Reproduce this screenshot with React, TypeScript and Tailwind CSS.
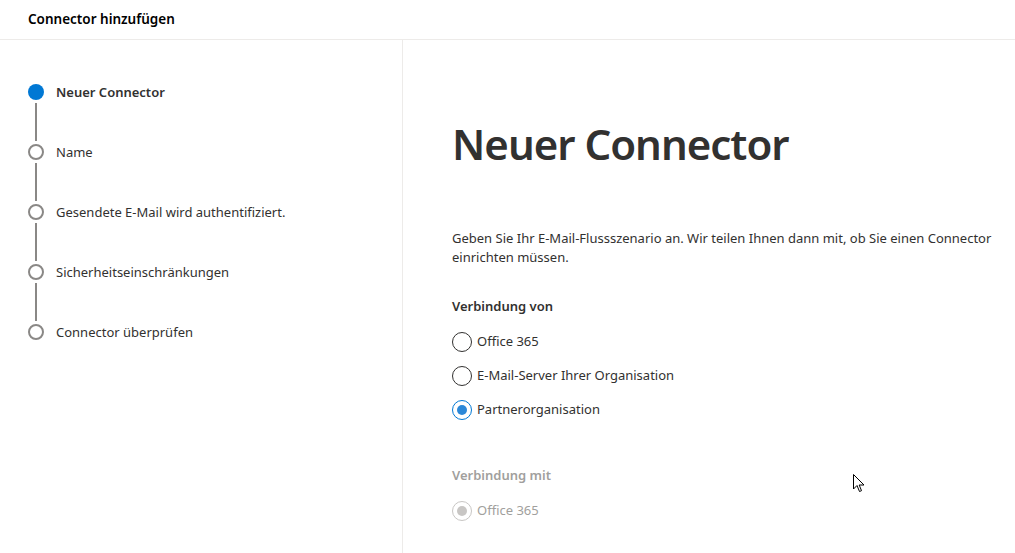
const steps = [
  'Neuer Connector',
  'Name',
  'Gesendete E-Mail wird authentifiziert.',
  'Sicherheitseinschränkungen',
  'Connector überprüfen',
];

const fromOptions = [
  { label: 'Office 365', checked: false },
  { label: 'E-Mail-Server Ihrer Organisation', checked: false },
  { label: 'Partnerorganisation', checked: true },
];

function Radio({ label, checked, disabled }: { label: string; checked?: boolean; disabled?: boolean }) {
  const ring = disabled ? 'border-[#c8c6c4]' : checked ? 'border-[#0078d4]' : 'border-[#323130]';
  return (
    <div className="flex items-center h-[34px]">
      <span className={`w-5 h-5 rounded-full border ${ring} flex items-center justify-center shrink-0`}>
        {checked && (
          <span className={`w-[10px] h-[10px] rounded-full ${disabled ? 'bg-[#c8c6c4]' : 'bg-[#2b88d8]'}`} />
        )}
      </span>
      <span className={`ml-[5px] text-[13px] ${disabled ? 'text-[#a19f9d]' : 'text-[#323130]'}`}>{label}</span>
    </div>
  );
}

export default function App() {
  return (
    <div
      className="w-[1015px] h-[553px] bg-white overflow-hidden flex flex-col relative"
      style={{ fontFamily: '"Segoe UI", "Noto Sans", sans-serif' }}
    >
      <header className="h-10 border-b border-[#edebe9] flex items-center px-7 shrink-0">
        <h1 className="text-[13.5px] font-semibold text-black">Connector hinzufügen</h1>
      </header>

      <div className="flex flex-1 min-h-0">
        <nav className="w-[403px] border-r border-[#edebe9] shrink-0 pl-7 pt-[44px]">
          {steps.map((step, i) => (
            <div key={step} className="flex flex-col">
              <div className="flex items-center h-4">
                {i === 0 ? (
                  <span className="w-4 h-4 rounded-full bg-[#0078d4] shrink-0" />
                ) : (
                  <span className="w-4 h-4 rounded-full border-2 border-[#8a8886] bg-white shrink-0" />
                )}
                <span
                  className={`ml-3 mt-[2px] text-[13px] ${i === 0 ? 'font-semibold text-[#323130]' : 'text-[#323130]'}`}
                >
                  {step}
                </span>
              </div>
              {i < steps.length - 1 && (
                <div className="w-4 flex justify-center py-[3px]">
                  <div className="w-[2px] h-[38px] bg-[#8a8886]" />
                </div>
              )}
            </div>
          ))}
        </nav>

        <main className="flex-1 pl-[49px] pt-[78px]">
          <h2 className="text-[42px] leading-[52px] font-semibold tracking-[-1px] text-[#323130]">Neuer Connector</h2>
          <p className="mt-[59px] text-[13px] leading-[19px] text-[#323130] pr-4">
            Geben Sie Ihr E-Mail-Flussszenario an. Wir teilen Ihnen dann mit, ob Sie einen Connector einrichten müssen.
          </p>
          <div className="mt-[30px] text-[13px] font-semibold text-[#323130] leading-[19px]">Verbindung von</div>
          <div className="mt-[9px] flex flex-col">
            {fromOptions.map((o) => (
              <Radio key={o.label} label={o.label} checked={o.checked} />
            ))}
          </div>
          <div className="mt-[39px] text-[13px] font-semibold text-[#a19f9d] leading-[19px]">Verbindung mit</div>
          <div className="mt-[9px]">
            <Radio label="Office 365" checked disabled />
          </div>
        </main>
      </div>

      <svg className="absolute left-[853px] top-[474px]" width="13" height="20" viewBox="0 0 13 20">
        <path d="M0.5 0.5 L0.5 15 L4 11.5 L6.5 17.5 L8.5 16.7 L6.2 11 L11 11 Z" fill="white" stroke="black" strokeWidth="1" />
      </svg>
    </div>
  );
}
